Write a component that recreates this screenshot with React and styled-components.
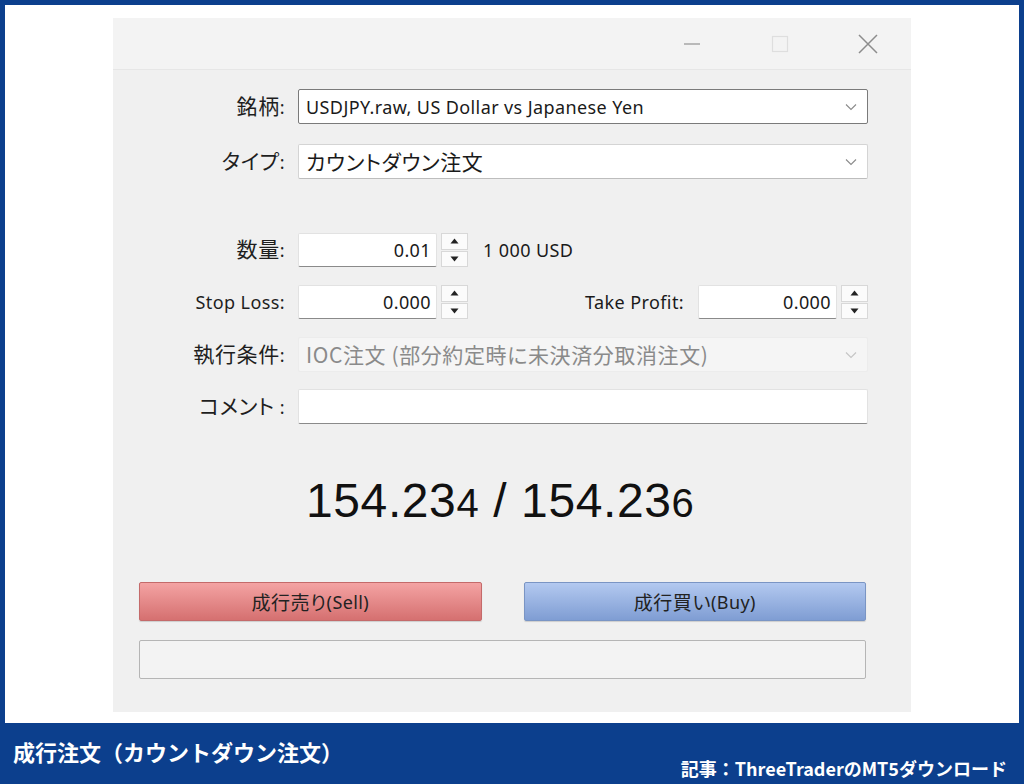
import React from 'react';
import styled, { createGlobalStyle } from 'styled-components';

const Global = createGlobalStyle`
  html, body { margin: 0; padding: 0; }
  body { background: #0c3f8d; font-family: "Noto Sans", "Noto Sans CJK JP", sans-serif; }
`;

const Page = styled.div`
  width: 1024px;
  height: 784px;
  background: #0c3f8d;
  padding: 5px 5px 0;
  box-sizing: border-box;
  display: flex;
  flex-direction: column;
`;

const Canvas = styled.div`
  height: 718px;
  background: #ffffff;
  padding: 13px 0 0 108px;
  box-sizing: border-box;
`;

const Dialog = styled.div`
  width: 798px;
  height: 694px;
  background: #f0f0f0;
  display: flex;
  flex-direction: column;
  font-size: 18px;
  letter-spacing: 0.4px;
  color: #1a1a1a;
`;

const TitleBar = styled.div`
  height: 52px;
  background: #f3f3f3;
  border-bottom: 1px solid #e6e6e6;
  display: flex;
  justify-content: flex-end;
  align-items: center;
  padding-right: 25px;
  gap: 52px;
  box-sizing: border-box;
`;

const WinButton = styled.div`
  width: 36px;
  height: 36px;
  display: flex;
  align-items: center;
  justify-content: center;
`;

/* kanji / kana rendered wider, kana proportional like Meiryo UI */
const Jp = styled.span`
  font-family: "Noto Sans CJK JP", sans-serif;
  font-size: ${p => p.$size || 21}px;
  font-feature-settings: "palt";
  letter-spacing: 0.6px;
  line-height: 1;
`;

const Form = styled.div`
  display: grid;
  grid-template-columns: 152px 570px;
  column-gap: 13px;
  padding: 19px 0 0 20px;
  align-items: center;
`;

const Label = styled.div`
  text-align: right;
  color: #1e1e1e;
  margin-bottom: ${p => p.$mb || 0}px;
`;

const Select = styled.div`
  height: 35px;
  box-sizing: border-box;
  background: ${p => (p.$disabled ? '#f5f5f5' : '#ffffff')};
  border: 1px solid ${p => (p.$focus ? '#7a7a7a' : p.$disabled ? '#ececec' : '#d4d4d4')};
  border-bottom-color: ${p => (p.$focus ? '#7a7a7a' : p.$disabled ? '#ececec' : '#bdbdbd')};
  border-radius: 2px;
  display: flex;
  align-items: center;
  justify-content: space-between;
  padding: 0 10px 0 7px;
  color: ${p => (p.$disabled ? '#8a8a8a' : '#1a1a1a')};
  margin-bottom: ${p => p.$mb || 0}px;
`;

const Chevron = ({ color = '#8a8a8a' }) => (
  <svg width="12" height="8" viewBox="0 0 12 8">
    <path d="M1 1.5 L6 6.5 L11 1.5" fill="none" stroke={color} strokeWidth="1.1" />
  </svg>
);

const FieldRow = styled.div`
  display: flex;
  align-items: center;
  margin-bottom: ${p => p.$mb || 0}px;
`;

const NumInput = styled.div`
  width: 139px;
  height: 34px;
  box-sizing: border-box;
  background: #ffffff;
  border: 1px solid #e2e2e2;
  border-bottom: 1.5px solid #8a8a8a;
  border-radius: 2px;
  display: flex;
  align-items: center;
  justify-content: flex-end;
  padding-right: 5px;
`;

const Spinner = styled.div`
  width: 27px;
  height: 34px;
  margin-left: 4px;
  display: flex;
  flex-direction: column;
  gap: 1px;
`;

const SpinButton = styled.div`
  flex: 1;
  background: #fbfbfb;
  border: 1px solid #d8d8d8;
  display: flex;
  align-items: center;
  justify-content: center;
`;

const Tri = ({ up }) => (
  <svg width="9" height="6" viewBox="0 0 9 6">
    <path d={up ? 'M0.5 5.5 L4.5 0.5 L8.5 5.5 Z' : 'M0.5 0.5 L4.5 5.5 L8.5 0.5 Z'} fill="#222" />
  </svg>
);

const Unit = styled.div`
  margin-left: 15px;
`;

const InlineLabel = styled.div`
  flex: 1;
  text-align: right;
  padding-right: 14px;
`;

const TextInput = styled.div`
  height: 35px;
  box-sizing: border-box;
  background: #ffffff;
  border: 1px solid #e2e2e2;
  border-bottom: 1.5px solid #8a8a8a;
  border-radius: 2px;
`;

const Price = styled.div`
  grid-column: 2;
  padding: 53px 0 0 8px;
  font-family: "Liberation Sans", "Noto Sans", sans-serif;
  font-size: 48px;
  color: #111;
  line-height: 1;
  height: 158px;
  box-sizing: border-box;
  letter-spacing: 0.6px;
`;

const Small = styled.span`
  font-size: 40px;
`;

const Actions = styled.div`
  padding: 0 45px 0 26px;
  display: flex;
  flex-direction: column;
  gap: 19px;
`;

const ButtonRow = styled.div`
  display: flex;
  gap: 42px;
`;

const TradeButton = styled.div`
  flex: 1;
  height: 39px;
  border-radius: 2px;
  display: flex;
  align-items: center;
  justify-content: center;
  color: #222;
  box-sizing: border-box;
  background: ${p =>
    p.$sell
      ? 'linear-gradient(#f4a3a3, #d57070)'
      : 'linear-gradient(#b3c9f0, #7f9dd3)'};
  border: 1px solid ${p => (p.$sell ? '#c46a6a' : '#7a95c4')};
  box-shadow: 0 1px 1px rgba(0, 0, 0, 0.15);
`;

const StatusBox = styled.div`
  height: 39px;
  box-sizing: border-box;
  background: #f3f3f3;
  border: 1px solid #b5b5b5;
  border-radius: 2px;
`;

const Footer = styled.div`
  flex: 1;
  display: flex;
  justify-content: space-between;
  padding: 0 12px 0 8px;
  color: #ffffff;
  font-family: "Noto Sans CJK JP", sans-serif;
  font-weight: 700;
`;

const Caption = styled.div`
  font-size: 22px;
  padding-top: 12px;
`;

const Source = styled.div`
  font-size: 18px;
  padding-top: 32px;
`;

const Number = ({ value }) => (
  <NumInput>{value}</NumInput>
);

const Spin = () => (
  <Spinner>
    <SpinButton><Tri up /></SpinButton>
    <SpinButton><Tri /></SpinButton>
  </Spinner>
);

export default function App() {
  return (
    <>
      <Global />
      <Page>
        <Canvas>
          <Dialog>
            <TitleBar>
              <WinButton>
                <svg width="18" height="4" viewBox="0 0 18 4">
                  <path d="M1 2 H17" stroke="#9a9a9a" strokeWidth="1.3" />
                </svg>
              </WinButton>
              <WinButton>
                <svg width="18" height="18" viewBox="0 0 18 18">
                  <rect x="1.5" y="1.5" width="15" height="15" fill="none" stroke="#dedede" strokeWidth="1.2" />
                </svg>
              </WinButton>
              <WinButton>
                <svg width="22" height="22" viewBox="0 0 22 22">
                  <path d="M2 2 L20 20 M20 2 L2 20" stroke="#8c8c8c" strokeWidth="1.5" />
                </svg>
              </WinButton>
            </TitleBar>

            <Form>
              <Label $mb={20}><Jp>銘柄</Jp>:</Label>
              <Select $focus $mb={20}>
                <span>USDJPY.raw, US Dollar vs Japanese Yen</span>
                <Chevron />
              </Select>

              <Label $mb={54}><Jp>タイプ</Jp>:</Label>
              <Select $mb={54}>
                <Jp>カウントダウン注文</Jp>
                <Chevron />
              </Select>

              <Label $mb={18}><Jp>数量</Jp>:</Label>
              <FieldRow $mb={18}>
                <Number value="0.01" />
                <Spin />
                <Unit>1 000 USD</Unit>
              </FieldRow>

              <Label $mb={18}>Stop Loss:</Label>
              <FieldRow $mb={18}>
                <Number value="0.000" />
                <Spin />
                <InlineLabel>Take Profit:</InlineLabel>
                <Number value="0.000" />
                <Spin />
              </FieldRow>

              <Label $mb={17}><Jp>執行条件</Jp>:</Label>
              <Select $disabled $mb={17}>
                <Jp>IOC注文 (部分約定時に未決済分取消注文)</Jp>
                <Chevron color="#c4c4c4" />
              </Select>

              <Label><Jp>コメント</Jp> :</Label>
              <TextInput />

              <Price>
                154.23<Small>4</Small> / 154.23<Small>6</Small>
              </Price>
            </Form>

            <Actions>
              <ButtonRow>
                <TradeButton $sell><Jp $size={19}>成行売り</Jp>(Sell)</TradeButton>
                <TradeButton><Jp $size={19}>成行買い</Jp>(Buy)</TradeButton>
              </ButtonRow>
              <StatusBox />
            </Actions>
          </Dialog>
        </Canvas>
        <Footer>
          <Caption>成行注文（カウントダウン注文）</Caption>
          <Source>記事：ThreeTraderのMT5ダウンロード</Source>
        </Footer>
      </Page>
    </>
  );
}
